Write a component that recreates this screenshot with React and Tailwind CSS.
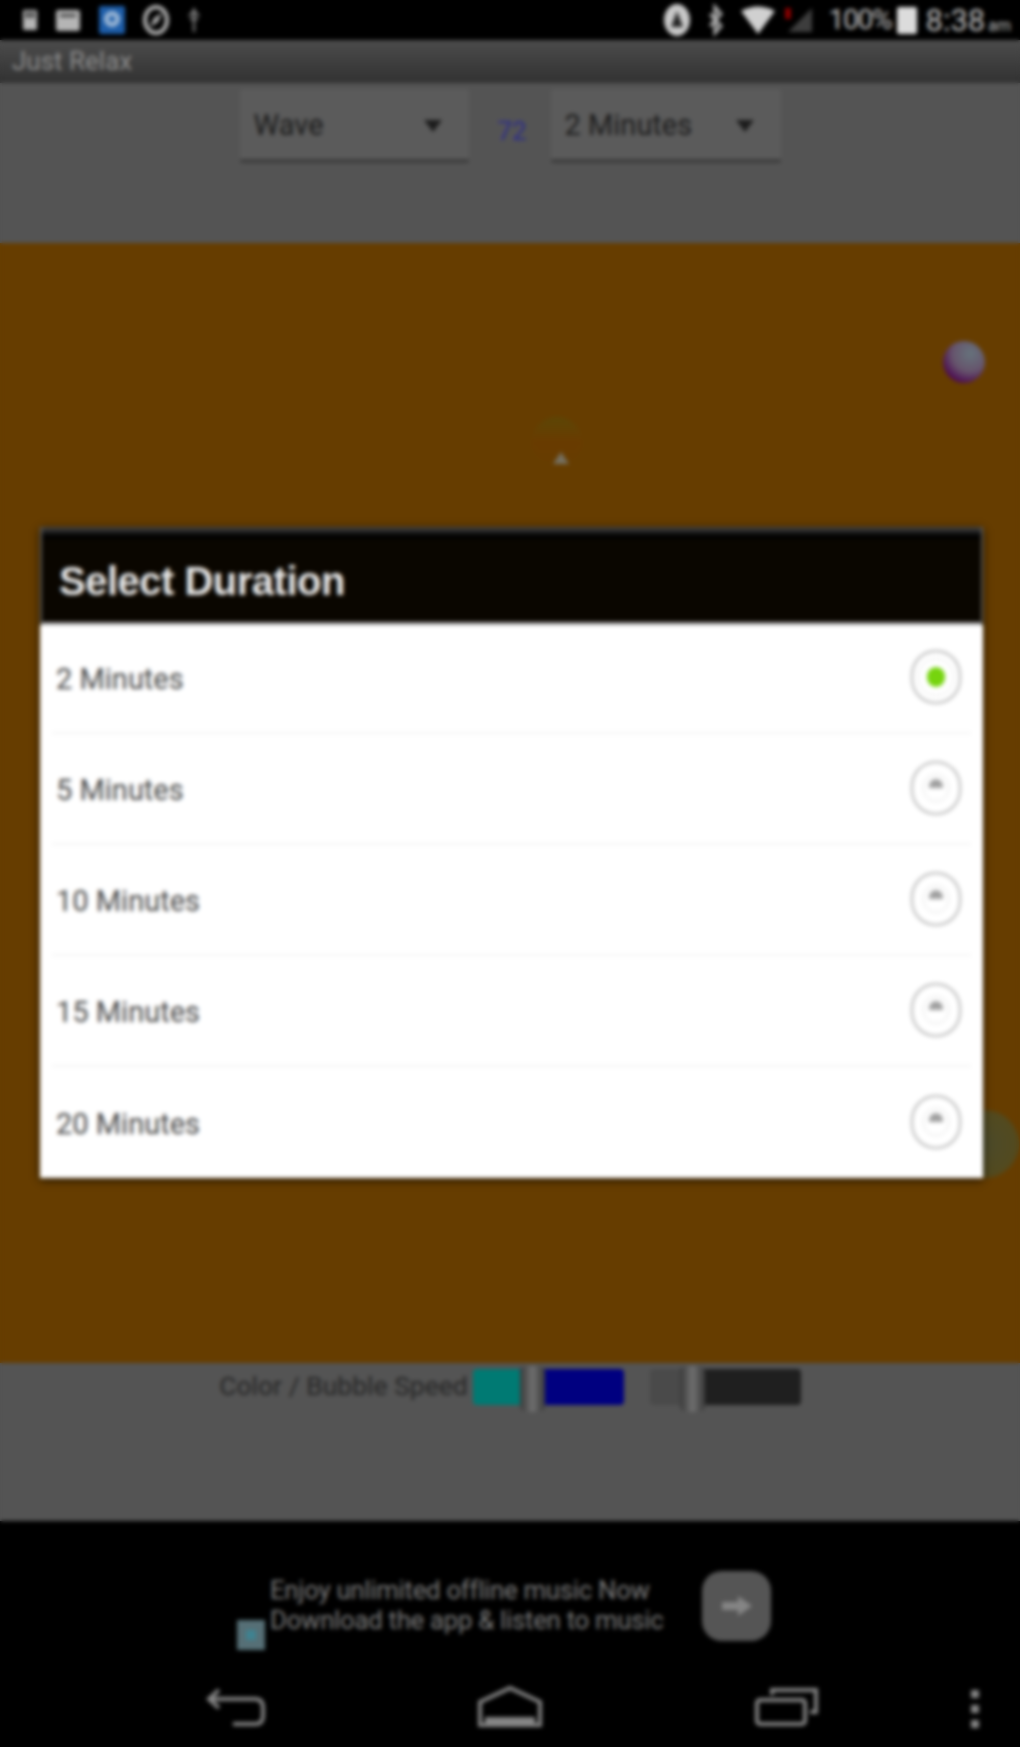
const options = ['2 Minutes', '5 Minutes', '10 Minutes', '15 Minutes', '20 Minutes']

function LeftStatusIcons() {
  return (
    <div className="flex items-center gap-[17px] pl-[22px]">
      <svg width="16" height="28" viewBox="0 0 16 28" fill="#b5b5b5">
        <rect x="1" y="4" width="14" height="20" rx="1" />
        <rect x="4" y="6" width="3" height="6" fill="#222" />
        <rect x="9" y="6" width="3" height="6" fill="#222" />
      </svg>
      <svg width="26" height="28" viewBox="0 0 26 28" fill="#b5b5b5">
        <rect x="1" y="4" width="24" height="21" rx="2" />
        <rect x="5" y="8" width="16" height="3" fill="#444" />
      </svg>
      <svg width="28" height="32" viewBox="0 0 28 32">
        <rect x="1" y="2" width="26" height="28" rx="2" fill="#1d5da8" />
        <circle cx="14" cy="15" r="8" fill="#9db8d6" />
        <circle cx="14" cy="15" r="3" fill="#1d5da8" />
      </svg>
      <svg width="26" height="34" viewBox="0 0 26 34">
        <ellipse cx="13" cy="17" rx="11" ry="13" fill="none" stroke="#b5b5b5" strokeWidth="4" />
        <path d="M19 10 L11 15 L7 24 L15 19 Z" fill="#b5b5b5" />
      </svg>
      <svg width="16" height="30" viewBox="0 0 16 30" stroke="#8a8a8a" fill="none" strokeWidth="2">
        <path d="M8 3 V27 M3 11 L8 6 L13 11 M4 14 H12" />
      </svg>
    </div>
  )
}

function RightStatusIcons() {
  return (
    <div className="flex items-center pr-[9px]">
      <svg width="34" height="36" viewBox="0 0 34 36" className="mr-[11px]">
        <ellipse cx="17" cy="18" rx="13" ry="16" fill="#c8c8c8" />
        <path d="M17 9 L23 25 H11 Z" fill="#222" />
      </svg>
      <svg width="22" height="36" viewBox="0 0 22 36" stroke="#b0b0b0" fill="none" strokeWidth="3" className="mr-[13px]">
        <path d="M5 12 L16 24 L10 31 V5 L16 12 L5 24" />
      </svg>
      <svg width="36" height="30" viewBox="0 0 36 30" fill="#d0d0d0" className="mr-[8px]">
        <path d="M1 6 Q18 -3 35 6 L18 29 Z" />
      </svg>
      <svg width="30" height="30" viewBox="0 0 30 30" className="mr-[15px]">
        <path d="M28 3 V27 H4 Z" fill="#3d3d3d" />
        <rect x="1" y="3" width="6" height="11" fill="#8a0000" />
      </svg>
      <span className="text-[28.5px] leading-none tracking-[-1.5px] text-[#bdbdbd] mr-[6px]">100%</span>
      <div className="w-[20px] h-[27px] bg-[#dcdcdc] rounded-[2px] mr-[8px]" />
      <span className="text-[31px] leading-none text-[#bdbdbd]">
        8:38<span className="text-[16px] ml-[3px]">am</span>
      </span>
    </div>
  )
}

function Spinner({ label, className }) {
  return (
    <div className={`flex items-center justify-between h-[74px] pl-[14px] pr-[26px] pt-[3px] rounded-[3px] bg-[#5b5b5b] border-b-[4px] border-[#3e3e3e] text-[29px] text-[#1c1c1c] ${className}`}>
      <span>{label}</span>
      <svg width="20" height="14" viewBox="0 0 20 14" fill="#1c1c1c">
        <path d="M1 1 H19 L10 13 Z" />
      </svg>
    </div>
  )
}

function Slider({ left, right, leftWidth, thumbLeft }) {
  return (
    <div className="relative flex w-[151px] h-[36px] rounded-[3px]">
      <div className={`h-full rounded-l-[4px] ${left} ${leftWidth}`} />
      <div className={`h-full flex-1 rounded-r-[4px] ${right}`} />
      <div className={`absolute top-[-3px] w-[25px] h-[46px] rounded-[6px] bg-gradient-to-r from-[#3a3a3a] via-[#707070] to-[#3a3a3a] ${thumbLeft}`} />
    </div>
  )
}

function Radio({ selected }) {
  return (
    <div className="w-[50px] h-[54px] rounded-full border-2 border-[#b5b5b5] flex items-center justify-center">
      {selected ? (
        <div className="w-[36px] h-[38px] rounded-full border border-[#e5e5e5] flex items-center justify-center">
          <div className="w-[18px] h-[20px] rounded-full bg-[#76d40e]" />
        </div>
      ) : (
        <div className="w-[26px] h-[28px] rounded-full border border-[#e2e2e2] flex justify-center pt-[4px]">
          <div className="w-[14px] h-[9px] rounded-t-full bg-[#a0a0a0]" />
        </div>
      )}
    </div>
  )
}

export default function App() {
  return (
    <div className="relative w-[1020px] h-[1747px] overflow-hidden bg-black font-['Roboto',sans-serif]">
      <div className="relative flex flex-col h-full">
        {/* Status bar */}
        <div className="flex items-center justify-between h-[40px] bg-black overflow-hidden">
          <LeftStatusIcons />
          <RightStatusIcons />
        </div>

        {/* Title */}
        <div className="flex items-center h-[43px] pl-[12px] bg-gradient-to-b from-[#4c4c4c] to-[#323232] text-[26px] text-[#8f8f8f]">
          Just Relax
        </div>

        {/* Spinners */}
        <div className="flex justify-center items-start h-[160px] pt-[6px] bg-[#545454]">
          <Spinner label="Wave" className="w-[229px] mr-[29px]" />
          <span className="mt-[27px] w-[53px] text-[26px] leading-[30px] text-[#2c2c8a]">72</span>
          <Spinner label="2 Minutes" className="w-[230px]" />
        </div>

        {/* Canvas */}
        <div className="relative h-[1120px] bg-[#663d00]">
          <div className="absolute left-[943px] top-[98px] w-[42px] h-[42px] rounded-full bg-[radial-gradient(circle_at_65%_30%,#66737c_0%,#66546c_45%,#4a0650_78%)]" />
          <div className="absolute left-[532px] top-[174px] w-[50px] h-[50px] rounded-full bg-gradient-to-b from-[#5c4606] via-[#693b00] to-[#663d00]" />
          <svg className="absolute left-[552px] top-[208px]" width="18" height="14" viewBox="0 0 18 14">
            <path d="M9 1 L17 13 H1 Z" fill="#757060" />
          </svg>
          <div className="absolute left-[951px] top-[867px] w-[68px] h-[68px] rounded-full bg-[radial-gradient(circle,#4c4a2a_0%,#524a20_60%,#5c4510_100%)]" />
        </div>

        {/* Sliders */}
        <div className="flex justify-center items-start h-[158px] pt-[6px] bg-[#545454]">
          <span className="mr-[5px] text-[26.5px] leading-[34px] text-[#262626]">Color / Bubble Speed</span>
          <Slider left="bg-[#007a73]" right="bg-[#000080]" leftWidth="w-[47px]" thumbLeft="left-[47px]" />
          <div className="w-[26px]" />
          <Slider left="bg-[#4a4a4a]" right="bg-[#1f1f1f]" leftWidth="w-[30px]" thumbLeft="left-[30px]" />
        </div>

        {/* Ad */}
        <div className="flex items-start justify-center h-[136px] pt-[50px] pr-[12px] bg-black">
          <div className="mt-[49px] w-[28px] h-[30px] mr-[5px] bg-[#566f76] flex items-center justify-center">
            <div className="w-[10px] h-[10px] bg-[#3f8290]" />
          </div>
          <div className="w-[432px] mt-[4px] text-[25.8px] leading-[30px] text-[#7c7c7c] tracking-[-0.3px]">
            <div>Enjoy unlimited offline music Now</div>
            <div>Download the app &amp; listen to music</div>
          </div>
          <div className="flex items-center justify-center w-[69px] h-[70px] rounded-[20px] bg-[#555555]">
            <svg width="32" height="22" viewBox="0 0 32 22" fill="#858585">
              <path d="M1 7 H17 V1 L31 11 L17 21 V15 H1 Z" />
            </svg>
          </div>
        </div>

        {/* Nav bar */}
        <div className="relative flex-1 bg-black">
          <svg className="absolute left-[205px] top-[31px]" width="62" height="40" viewBox="0 0 62 40" fill="none" stroke="#858585" strokeWidth="4">
            <path d="M14 2 L4 11 L14 20 M4 11 H50 Q58 11 58 20 V28 Q58 36 50 36 H28" />
          </svg>
          <svg className="absolute left-[477px] top-[28px]" width="66" height="42" viewBox="0 0 66 42" fill="none" stroke="#858585" strokeWidth="4">
            <path d="M3 40 V17 L33 3 L63 17 V40 Z" />
            <path d="M8 32 H58 V38 H8 Z" fill="#858585" stroke="none" />
          </svg>
          <svg className="absolute left-[754px] top-[29px]" width="66" height="40" viewBox="0 0 66 40" fill="none" stroke="#858585" strokeWidth="4">
            <rect x="3" y="14" width="48" height="24" rx="3" />
            <path d="M18 9 V4 H62 V26 H56" />
          </svg>
          <div className="absolute left-[971px] top-[33px] flex flex-col gap-[7px]">
            <div className="w-[8px] h-[8px] bg-[#858585]" />
            <div className="w-[8px] h-[8px] bg-[#858585]" />
            <div className="w-[8px] h-[8px] bg-[#858585]" />
          </div>
        </div>

        {/* Dialog */}
        <div className="absolute left-[40px] top-[527px] w-[943px] shadow-[0_2px_8px_rgba(0,0,0,0.75)]">
          <div className="relative h-[98px] -mb-[2px] flex flex-col bg-[#0a0600] border-x-2 border-[#5a5a5a]">
            <div className="h-[12px] bg-gradient-to-b from-[#4a4a4a] to-[#000000]" />
            <div className="flex-1 flex items-center pl-[17px] text-[40px] font-bold tracking-[-0.5px] text-[#e8e8e8] font-['Liberation_Sans',sans-serif]">
              Select Duration
            </div>
            <div className="h-[3px] bg-[#a0a0a0]" />
          </div>
          <div className="bg-white">
            {options.map((opt, i) => (
              <div key={opt} className={`flex items-center justify-between h-[111px] mx-[12px] pl-[4px] pr-[10px] ${i < options.length - 1 ? 'border-b-2 border-[#f4f4f4]' : ''}`}>
                <span className="text-[29px] pt-[4px] text-[#4a4a4a]">{opt}</span>
                <div className="pb-[2px]">
                  <Radio selected={i === 0} />
                </div>
              </div>
            ))}
          </div>
        </div>

        {/* Softens the whole shot, the source is a low-res capture */}
        <div className="absolute inset-0 backdrop-blur-[2px]" />
      </div>
    </div>
  )
}
